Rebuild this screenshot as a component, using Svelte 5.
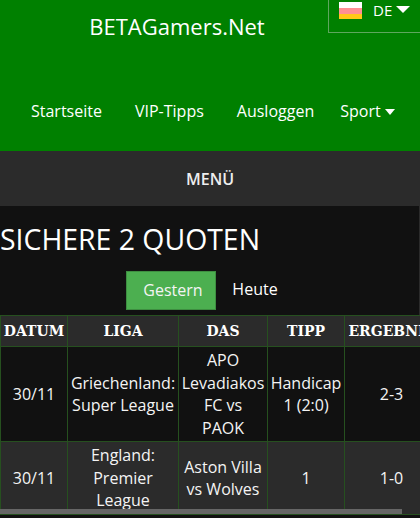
<script>
    const links = ["Startseite", "VIP-Tipps", "Ausloggen"];
    const columns = ["DATUM", "LIGA", "DAS", "TIPP", "ERGEBNIS"];
    const rows = [
        ["30/11", "Griechenland: Super League", "APO Levadiakos FC vs PAOK", "Handicap 1 (2:0)", "2-3"],
        ["30/11", "England: Premier League", "Aston Villa vs Wolves", "1", "1-0"],
    ];
</script>

<div class="page">
    <header class="top">
        <div class="lang">
            <span class="flag"></span>
            <span class="code">DE</span>
            <span class="caret big"></span>
        </div>
        <div class="brand">BETAGamers.Net</div>
        <nav class="nav">
            {#each links as link}
                <span>{link}</span>
            {/each}
            <span class="sport">Sport <i class="caret"></i></span>
        </nav>
    </header>

    <div class="menu">MENÜ</div>

    <main>
        <div class="intro">
            <h1>SICHERE 2 QUOTEN</h1>
            <div class="tabs">
                <span class="tab active">Gestern</span>
                <span class="tab">Heute</span>
            </div>
        </div>
        <div class="table-wrap">
            <table>
                <colgroup>
                    <col style="width: 67px" />
                    <col style="width: 111px" />
                    <col style="width: 89px" />
                    <col style="width: 77px" />
                    <col style="width: 94px" />
                </colgroup>
                <thead>
                    <tr>
                        {#each columns as col}
                            <th>{col}</th>
                        {/each}
                    </tr>
                </thead>
                <tbody>
                    {#each rows as row}
                        <tr>
                            {#each row as cell}
                                <td>{cell}</td>
                            {/each}
                        </tr>
                    {/each}
                </tbody>
            </table>
            <div class="thumb"></div>
        </div>
    </main>
</div>

<style>
    :global(body) {
        margin: 0;
        background: #111;
    }

    .page {
        width: 420px;
        height: 518px;
        overflow: hidden;
        background: #111;
        color: #fff;
        font-family: "Open Sans", "Noto Sans", sans-serif;
    }

    .top {
        position: relative;
        height: 151px;
        background: #008000;
    }

    .lang {
        position: absolute;
        top: 0;
        right: 0;
        width: 92px;
        height: 33px;
        display: flex;
        align-items: flex-start;
        padding: 2px 0 0 10px;
        box-sizing: border-box;
        border-left: 1px solid #5ea65e;
        border-bottom: 1px solid #5ea65e;
    }

    .flag {
        width: 23px;
        height: 17px;
        background: linear-gradient(#fff 0 6px, #ff8f94 6px 12px, #ffc818 12px);
    }

    .code {
        margin: 0 0 0 11px;
        font-size: 15px;
        line-height: 16px;
    }

    .caret {
        display: inline-block;
        width: 0;
        height: 0;
        margin-bottom: 2px;
        border-left: 5px solid transparent;
        border-right: 5px solid transparent;
        border-top: 6px solid #fff;
    }

    .caret.big {
        margin: 4px 0 0 4px;
        border-left-width: 7px;
        border-right-width: 7px;
        border-top-width: 7px;
    }

    .brand {
        padding-top: 10px;
        margin-left: -66px;
        text-align: center;
        font-size: 22px;
        line-height: 32px;
    }

    .nav {
        display: flex;
        gap: 33px;
        padding: 58px 0 0 31px;
        font-size: 16px;
        line-height: 22px;
        white-space: nowrap;
    }

    .sport {
        margin-left: -7px;
    }

    .menu {
        height: 55px;
        line-height: 57px;
        background: #2b2b2b;
        color: #eee;
        text-align: center;
        font-size: 16px;
        font-weight: 600;
    }

    .intro {
        padding-bottom: 5px;
        border-right: 1px solid #2b2b2b;
    }

    h1 {
        margin: 0;
        padding-top: 16px;
        font-size: 28.4px;
        line-height: 34px;
        font-weight: 400;
    }

    .tabs {
        display: flex;
        justify-content: center;
        margin-top: 15px;
        padding-left: 1px;
    }

    .tab {
        padding: 0 16px;
        font-size: 16px;
        line-height: 37px;
    }

    .tab.active {
        width: 56px;
        background: #4caf50;
        color: #f4f4f4;
        border: 1px solid #3e8e41;
    }

    .table-wrap {
        position: relative;
        overflow: hidden;
    }

    table {
        width: 438px;
        table-layout: fixed;
        border-collapse: collapse;
        font-size: 16px;
    }

    th,
    td {
        border: 1px solid #26501f;
        padding: 0 2px;
        text-align: center;
    }

    th {
        height: 30px;
        background: #2b2b2b;
        font-family: "DejaVu Serif", serif;
        font-size: 14px;
        font-weight: 700;
        white-space: nowrap;
    }

    td {
        line-height: 22.5px;
        color: #f4f4f4;
    }

    tbody tr:first-child td {
        height: 94px;
        background: #111;
    }

    tbody tr:last-child td {
        height: 72px;
        background: #2b2b2b;
    }

    .thumb {
        position: absolute;
        left: 0;
        bottom: 1px;
        width: 402px;
        height: 5px;
        background: #666;
    }
</style>
